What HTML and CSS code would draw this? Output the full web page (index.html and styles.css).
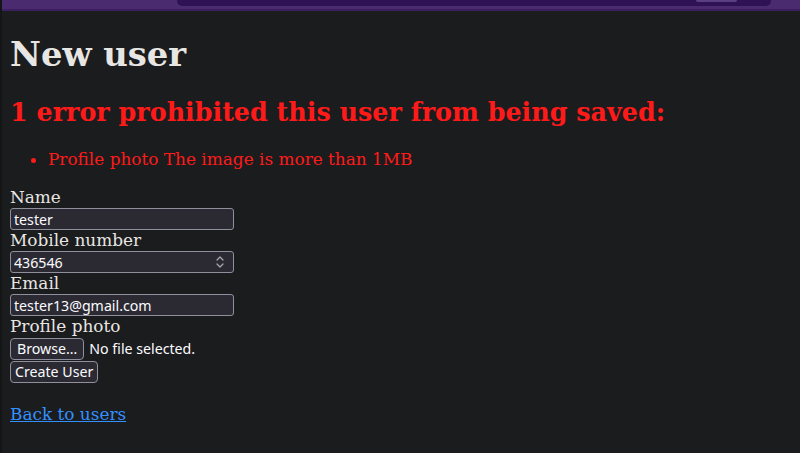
FILE: index.html
```html
<!DOCTYPE html>
<html lang="en">
<head>
<meta charset="utf-8">
<title>New user</title>
<link rel="stylesheet" href="styles.css">
</head>
<body>
<div class="topbar">
  <div class="tab"><div class="pill"></div></div>
</div>
<main class="page">
  <h1 class="title">New user</h1>
  <form class="form">
    <div class="errors">
      <h2 class="errors-title">1 error prohibited this user from being saved:</h2>
      <ul class="errors-list">
        <li>Profile photo The image is more than 1MB</li>
      </ul>
    </div>
    <div class="field">
      <label class="label" for="name">Name</label>
      <input class="input" id="name" type="text" value="tester">
    </div>
    <div class="field">
      <label class="label" for="mobile">Mobile number</label>
      <div class="input number">
        <input class="number-value" id="mobile" type="text" value="436546">
        <svg class="spinner" width="8" height="14" viewBox="0 0 8 14" aria-hidden="true">
          <path d="M1 5 L4 2 L7 5" fill="none" stroke="#a9a9b2" stroke-width="1.2" stroke-linecap="round" stroke-linejoin="round"/>
          <path d="M1 9 L4 12 L7 9" fill="none" stroke="#a9a9b2" stroke-width="1.2" stroke-linecap="round" stroke-linejoin="round"/>
        </svg>
      </div>
    </div>
    <div class="field">
      <label class="label" for="email">Email</label>
      <input class="input" id="email" type="text" value="tester13@gmail.com">
    </div>
    <div class="field">
      <label class="label">Profile photo</label>
      <div class="file-row">
        <button class="btn btn-browse" type="button">Browse…</button>
        <span class="file-status">No file selected.</span>
      </div>
    </div>
    <div class="submit-row">
      <button class="btn btn-submit" type="button">Create User</button>
    </div>
  </form>
  <div class="back">
    <a class="back-link" href="#">Back to users</a>
  </div>
</main>
</body>
</html>
```
FILE: styles.css
```css
html {
  background: #1b1c1e;
}

body {
  margin: 0;
  min-height: 100vh;
  box-sizing: border-box;
  background: #1b1c1e;
  border-left: 2px solid #141517;
  color: #e8e6e3;
  font-family: "DejaVu Serif", serif;
  font-size: 16.9px;
  line-height: 20.5px;
}

.topbar {
  height: 9px;
  background: #4b2b70;
  border-bottom: 2px solid #3b1f5e;
  display: flex;
  padding-left: 175px;
  padding-right: 29px;
}

.tab {
  flex: 1;
  height: 6px;
  background: #2f1156;
  border-radius: 0 0 5px 5px;
  display: flex;
  padding-left: 519px;
}

.pill {
  width: 41px;
  height: 2px;
  background: #5b3f85;
  border-radius: 0 0 2px 2px;
}

.page {
  padding: 0 8px;
}

.title {
  font-size: 33.8px;
  line-height: 41px;
  font-weight: bold;
  margin: 23px 0 21.5px;
}

.errors {
  color: #ff1a1a;
}

.errors-title {
  font-size: 25.4px;
  line-height: 30.7px;
  font-weight: bold;
  margin: 0;
}

.errors-list {
  margin: 21.5px 0 17.8px;
  padding-left: 38px;
}

.label {
  display: block;
  line-height: 20.5px;
}

.input {
  display: block;
  box-sizing: border-box;
  width: 224px;
  height: 22px;
  margin: 0.5px 0 0;
  padding: 0 3px;
  background: #2b2a33;
  border: 1px solid #8f8f9d;
  border-radius: 3px;
  color: #fbfbfe;
  font-family: "Noto Sans", sans-serif;
  font-size: 14.2px;
  outline: none;
}

.number {
  display: flex;
  align-items: center;
  padding-right: 9px;
}

.number-value {
  flex: 1;
  min-width: 0;
  height: 100%;
  padding: 0;
  border: 0;
  background: transparent;
  color: inherit;
  font: inherit;
  outline: none;
}

.spinner {
  display: block;
}

.file-row {
  display: flex;
  align-items: center;
  gap: 5px;
  margin-top: 1.5px;
}

.btn {
  box-sizing: border-box;
  height: 22px;
  padding: 0 5px;
  background: #2b2a33;
  border: 1px solid #8f8f9d;
  border-radius: 4px;
  color: #fbfbfe;
  font-family: "Noto Sans", sans-serif;
  font-size: 14.2px;
  line-height: 20px;
}

.btn-browse {
  padding: 0 6px;
}

.btn-submit {
  padding: 0 4px;
}

.file-status {
  color: #fbfbfe;
  font-family: "Noto Sans", sans-serif;
  font-size: 14.2px;
}

.submit-row {
  margin-top: 1px;
}

.back {
  margin-top: 20.5px;
}

.back-link {
  color: #3391ff;
  text-decoration: underline;
}
```
